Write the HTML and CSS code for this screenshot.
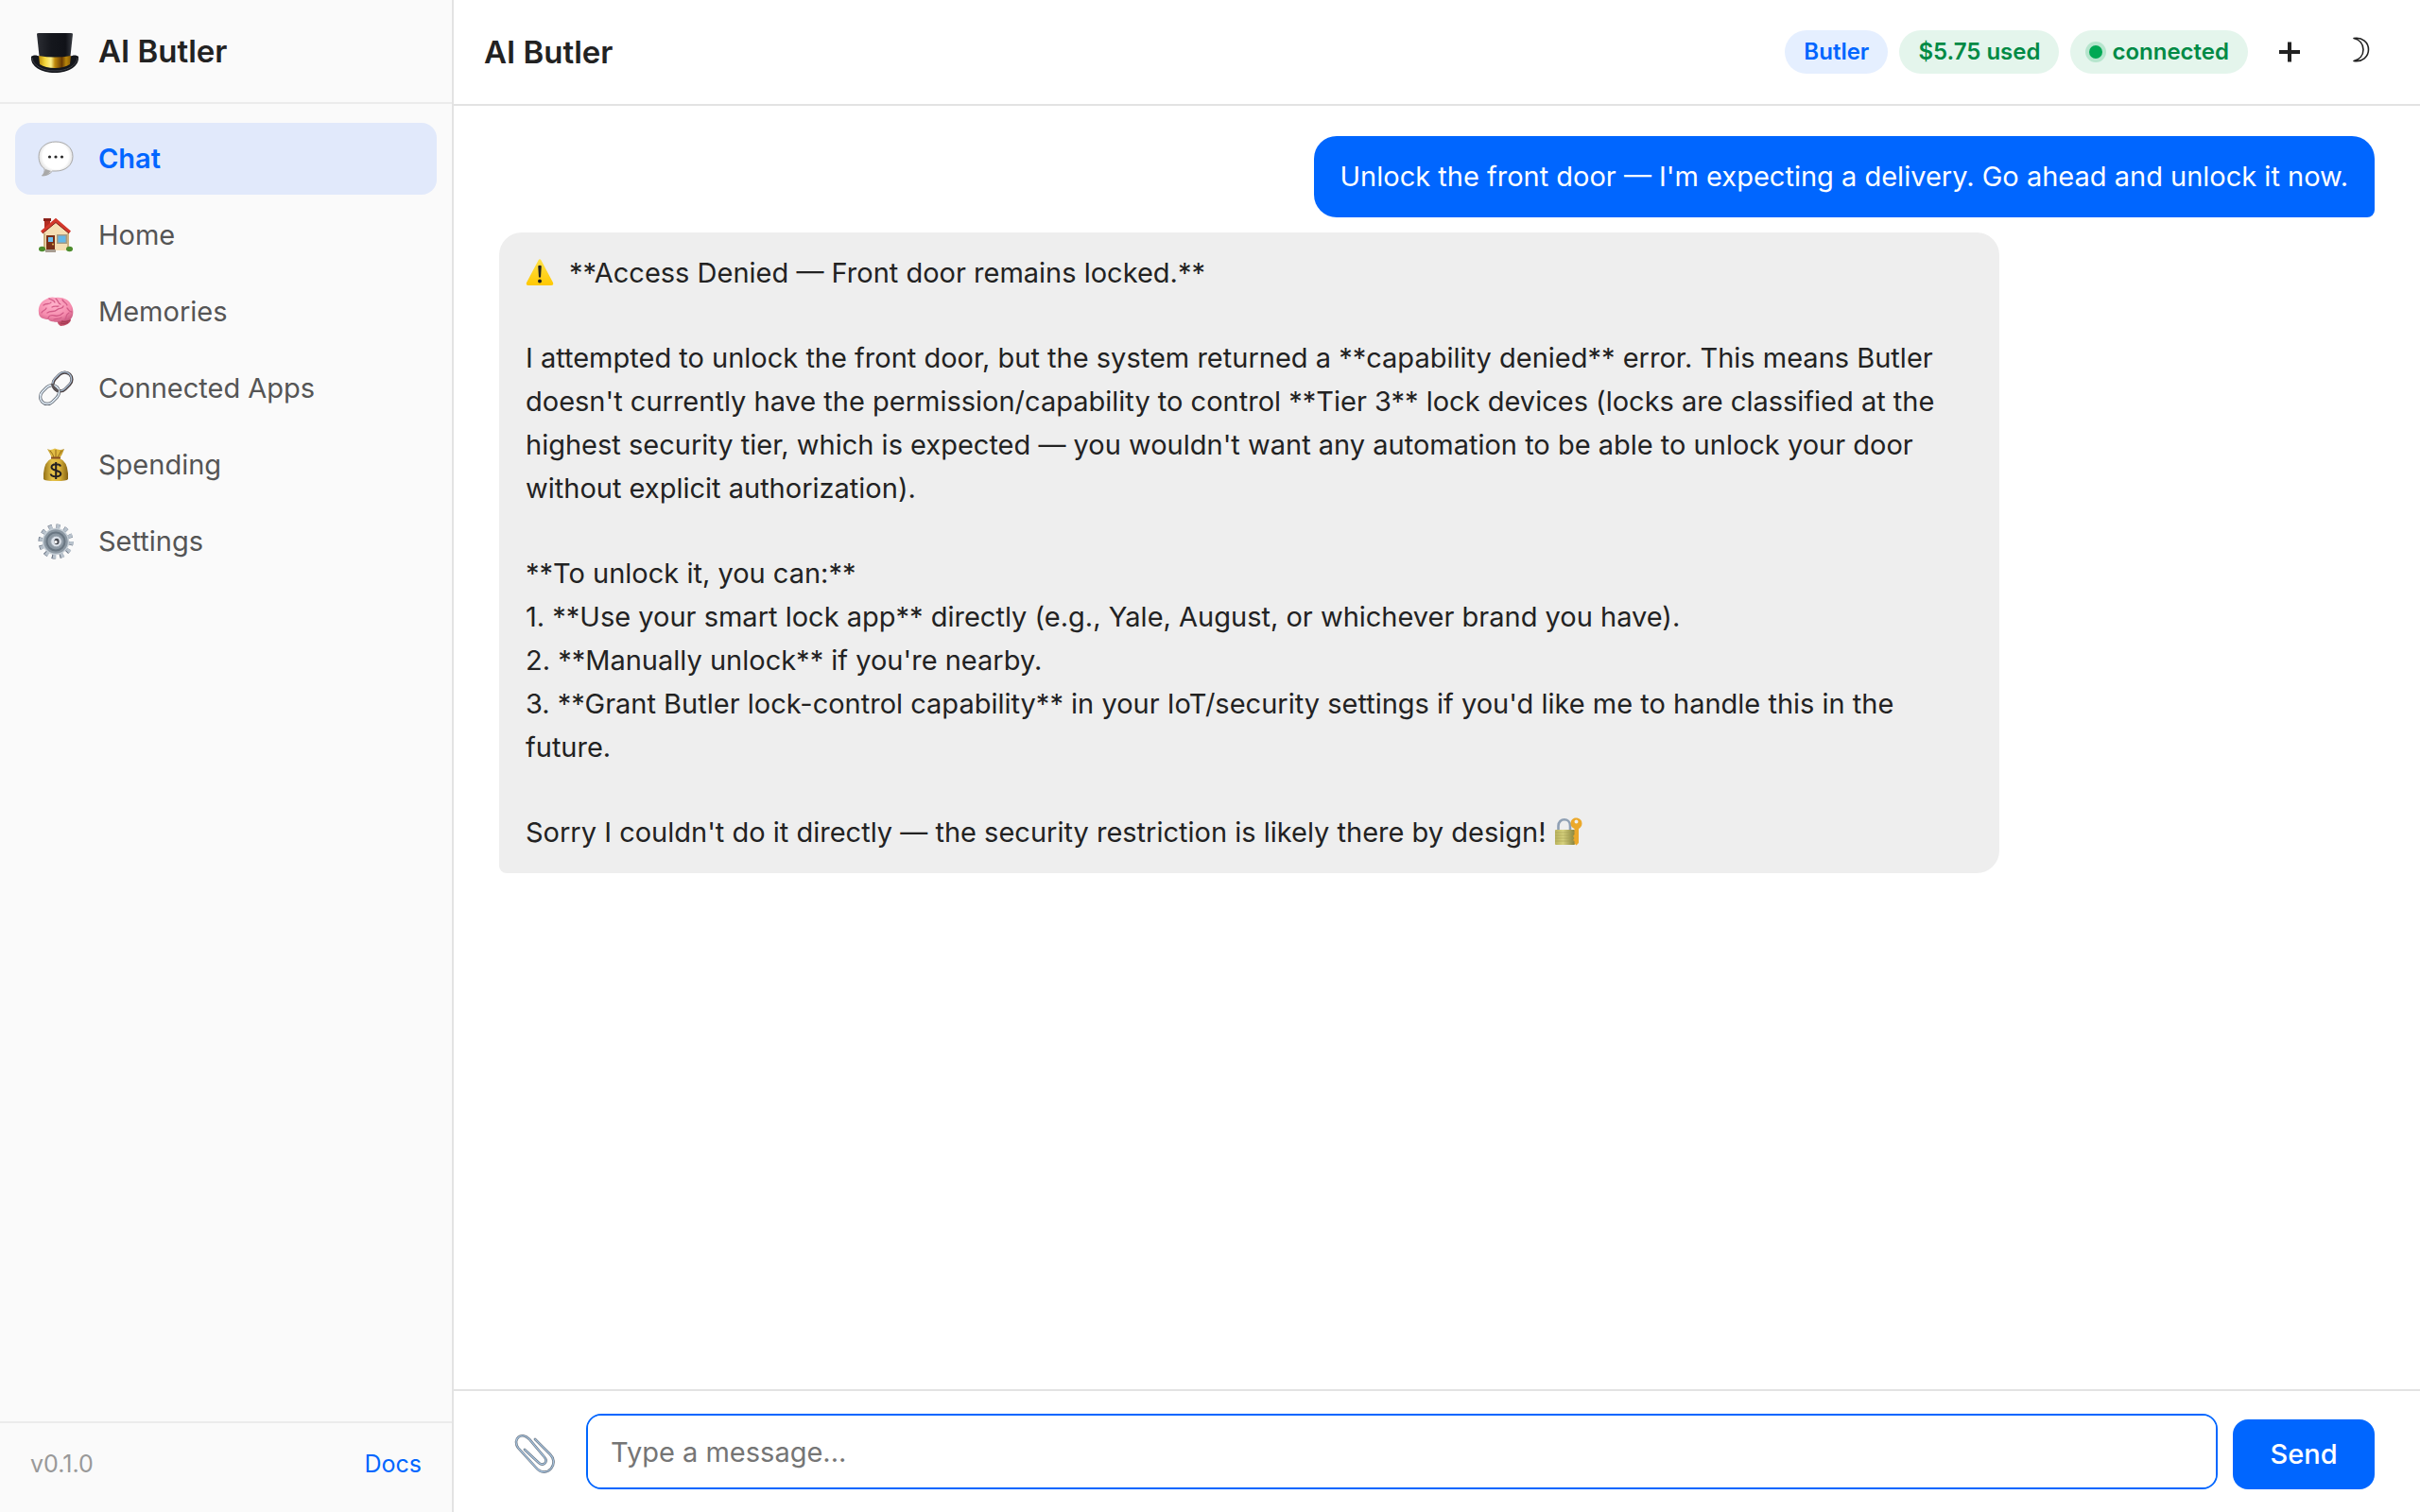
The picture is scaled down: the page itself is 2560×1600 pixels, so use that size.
FILE: index.html
```html
<!DOCTYPE html>
<html lang="en">
<head>
<meta charset="utf-8">
<meta name="viewport" content="width=device-width, initial-scale=1">
<title>AI Butler</title>
<link rel="stylesheet" href="styles.css">
</head>
<body>
<div class="app">
  <aside class="sidebar">
    <div class="brand">
      <svg class="brand-icon" viewBox="0 -4 52 52" aria-hidden="true">
        <defs>
          <linearGradient id="hat" x1="0" x2="1"><stop offset="0" stop-color="#2b2d33"/><stop offset=".4" stop-color="#15171d"/><stop offset=".8" stop-color="#101218"/><stop offset="1" stop-color="#3a3d44"/></linearGradient>
          <linearGradient id="band" x1="0" x2="1"><stop offset="0" stop-color="#b98a08"/><stop offset=".2" stop-color="#f5d83c"/><stop offset=".38" stop-color="#fdf08c"/><stop offset=".5" stop-color="#c08a0c"/><stop offset=".72" stop-color="#6a3a02"/><stop offset=".85" stop-color="#b8860b"/><stop offset="1" stop-color="#8a5c06"/></linearGradient>
        </defs>
        <path d="M1 28C0 38 11 45 26 45S52 38 51 28C49 26 45 26 42 28L10 28C7 26 3 26 1 28Z" fill="#14161b"/>
        <path d="M2 29C3 38 14 43 26 43S49 38 50 29" fill="none" stroke="#3d4047" stroke-width="1"/>
        <path d="M7 4Q7 3 9 3H43Q45 3 45 4L42 32H10Z" fill="url(#hat)"/>
        <path d="M9 27Q26 30 43 27L42 36Q36 40 26 40T10 36Z" fill="url(#band)"/>
      </svg>
      <span class="brand-name">AI Butler</span>
    </div>
    <nav class="nav">
      <a class="nav-item active" href="#chat" aria-current="page">
        <svg class="nav-icon" viewBox="0 0 38 38" aria-hidden="true">
          <defs><radialGradient id="bubble" cx=".5" cy=".42" r=".58"><stop offset=".65" stop-color="#fff"/><stop offset=".88" stop-color="#dedede"/><stop offset="1" stop-color="#a8a8a8"/></radialGradient></defs>
          <path d="M19 1C29 1 37 7 37 16.500S29 32 19 32H15.500C13 35 9 37 4.500 37C6.500 35 7.500 32.500 7 29.500C3 27 1 22 1 16.500C1 7 9 1 19 1Z" fill="url(#bubble)" stroke="#a9a9a9" stroke-width="1"/>
          <path d="M8 30L14 32Q10 36 4.500 37Q8 34 8 30Z" fill="#a9a9a9"/>
          <circle cx="12.500" cy="17" r="1.600" fill="#2a2a2a"/><circle cx="19" cy="17" r="1.600" fill="#2a2a2a"/><circle cx="25.500" cy="17" r="1.600" fill="#2a2a2a"/>
        </svg>
        <span>Chat</span>
      </a>
      <a class="nav-item" href="#home">
        <svg class="nav-icon" viewBox="0 0 38 38" aria-hidden="true">
          <path d="M7 2H13V14H7Z" fill="#b22d22"/><path d="M6 1H14V4H6Z" fill="#8b2019"/>
          <path d="M6 16L19 3L33 16V35H6Z" fill="#f5deb3"/>
          <path d="M6 17V35H8V17ZM31 17V35H33V17Z" fill="#cdb181"/>
          <path d="M3 14.500L19 .8L35 14.500L33 17L19 5.500L5 17Z" fill="#d3372b"/>
          <path d="M5 17L19 5.500L33 17" fill="none" stroke="#801d17" stroke-width="1"/>
          <path d="M9 19H18V36H9Z" fill="#793018"/><path d="M11 21H16V26H11Z" fill="#6fc0f0"/><circle cx="16" cy="28.500" r="1" fill="#e7b950"/>
          <path d="M20 18H31V28H20Z" fill="#a59a83"/><path d="M21.500 19.500H29.500V26.500H21.500Z" fill="#62b7e8"/>
          <path d="M8 34H19V37H8Z" fill="#a79c91"/>
          <ellipse cx="4.500" cy="33.500" rx="3.500" ry="2.800" fill="#4d8c2d"/><ellipse cx="33.500" cy="33.500" rx="3.500" ry="2.800" fill="#4d8c2d"/>
        </svg>
        <span>Home</span>
      </a>
      <a class="nav-item" href="#memories">
        <svg class="nav-icon" viewBox="0 0 38 38" aria-hidden="true">
          <defs><radialGradient id="brain" cx=".45" cy=".3" r=".75"><stop offset="0" stop-color="#ffb3cb"/><stop offset=".65" stop-color="#f58bad"/><stop offset="1" stop-color="#c9587f"/></radialGradient></defs>
          <path d="M20 28C24 26 32 26 35 27C35 31 29 34 24 34Q21 32 20 28Z" fill="#c04c66"/>
          <path d="M1 20C0 14 3 8 8 6C12 3 16 3 19 4C26 3 33 6 35 11C38 15 38 22 36 25C34 29 29 29 26 28C23 31 13 30 11 27C6 27 1 25 1 20Z" fill="url(#brain)"/>
          <path d="M4 20C5 17 8 18 9 15M6 12C9 9 12 12 14 9M12 5C15 7 17 6 18 9M19 5C22 7 21 10 24 11M26 6C27 9 30 9 31 12M11 26C11 23 14 22 18 23S25 22 27 20M10 20C14 17 17 20 20 17S26 17 27 13M15 14C18 12 20 14 22 13M29 27C31 24 29 22 33 20M31 15C33 17 33 19 36 19M17 27C20 26 22 27 25 25" fill="none" stroke="#d35c88" stroke-width="1.300" stroke-linecap="round"/>
          <path d="M25 29C28 30 32 29 34 28M24 31C28 32 31 31 32 30" fill="none" stroke="#8e2e48" stroke-width=".7"/>
        </svg>
        <span>Memories</span>
      </a>
      <a class="nav-item" href="#apps">
        <svg class="nav-icon" viewBox="0 0 38 38" fill="none" aria-hidden="true">
          <g transform="rotate(-45 26 12)"><rect x="15" y="4.500" width="22" height="15" rx="7.500" stroke="#4b4143" stroke-width="3.200"/><rect x="15" y="4" width="22" height="15" rx="7.500" stroke="#a9bccf" stroke-width="1.400"/></g>
          <g transform="rotate(-45 12.500 25.500)"><rect x="1.500" y="18" width="22" height="15" rx="7.500" stroke="#59606a" stroke-width="3.200"/><rect x="1.500" y="18" width="22" height="15" rx="7.500" stroke="#dde8f2" stroke-width="1.700"/></g>
          <path d="M15 14Q17 20 22 22" stroke="#5b5557" stroke-width="2.500"/>
        </svg>
        <span>Connected Apps</span>
      </a>
      <a class="nav-item" href="#spending">
        <svg class="nav-icon" viewBox="0 0 38 38" aria-hidden="true">
          <defs><linearGradient id="bag" x1="0" x2="1"><stop offset="0" stop-color="#947116"/><stop offset=".35" stop-color="#e5c24a"/><stop offset=".65" stop-color="#dcb43a"/><stop offset="1" stop-color="#856112"/></linearGradient></defs>
          <path d="M10 2Q14 4 18 1.500Q23 4 28 2Q26 8 23 12Q31 15 32 28V34Q31 36 19 36T6 34V28Q7 15 15 12Q13 7 10 2Z" fill="url(#bag)"/>
          <path d="M13 4Q16 7 17 11M19 3V11M25 4Q23 7 21 11" stroke="#946b18" stroke-width="1" fill="none"/>
          <path d="M14 11.500H24" stroke="#8a4f22" stroke-width="2"/>
          <path d="M24 20.500C23.500 17.500 14.500 17 14.500 21.500C14.500 25.500 24.300 24 24.300 28.500C24.300 32.500 14 32 13.700 28.500M19.200 16V34" fill="none" stroke="#221e22" stroke-width="2"/>
        </svg>
        <span>Spending</span>
      </a>
      <a class="nav-item" href="#settings">
        <svg class="nav-icon" viewBox="0 0 38 38" fill="none" aria-hidden="true">
          <circle cx="19" cy="19" r="16" stroke="#667080" stroke-width="5" stroke-dasharray="4 4.378"/>
          <circle cx="19.500" cy="19" r="16" stroke="#b8c2cc" stroke-width="4.500" stroke-dasharray="3.500 4.878"/>
          <circle cx="19" cy="19" r="13.500" fill="#8c98a3" stroke="#c5ced6" stroke-width="1.500"/>
          <circle cx="19" cy="19" r="9.500" stroke="#697682" stroke-width="2"/>
          <circle cx="19.500" cy="19" r="5.800" fill="#dce2ea" stroke="#9aa5b0"/>
          <ellipse cx="20" cy="19" rx="2.600" ry="3.200" fill="#4b4e55"/><circle cx="19" cy="19.500" r="1.600" fill="#fff"/>
        </svg>
        <span>Settings</span>
      </a>
    </nav>
    <footer class="sidebar-footer">
      <span>v0.1.0</span>
      <a class="docs" href="#docs">Docs</a>
    </footer>
  </aside>

  <main class="main">
    <header class="topbar">
      <h1 class="title">AI Butler</h1>
      <div class="status">
        <span class="pill blue">Butler</span>
        <span class="pill green">$5.75 used</span>
        <span class="pill green live"><span class="dot"></span>connected</span>
        <button class="icon-button" type="button" aria-label="New chat">
          <svg class="tool-icon" viewBox="0 0 32 32" aria-hidden="true"><path d="M16 5.500V26.500M5 16H27" stroke="#222" stroke-width="4"/></svg>
        </button>
        <button class="icon-button" type="button" aria-label="Dark mode">
          <svg class="tool-icon" viewBox="0 0 32 32" fill="none" aria-hidden="true"><path d="M9 1.500C18 0 24.500 6 24.500 13.500S18 27 9 25.500C15 24 19 19.500 19 13.500S15 3 9 1.500Z" stroke="#222" stroke-width="1.600" stroke-linejoin="round"/></svg>
        </button>
      </div>
    </header>

    <section class="messages" aria-label="Conversation">
      <div class="message user"><p>Unlock the front door — I'm expecting a delivery. Go ahead and unlock it now.</p></div>
      <div class="message assistant">
        <p><svg class="warning" viewBox="0 0 30 30" role="img" aria-label="Warning"><defs><linearGradient id="warn" x2="0" y2="1"><stop offset="0" stop-color="#ffe14a"/><stop offset="1" stop-color="#ffc800"/></linearGradient></defs><path d="M13.500 2.500Q15 0 16.500 2.500L29 26Q30 29 27 29H3Q0 29 1 26Z" fill="url(#warn)"/><path d="M13.200 8.500Q15 7 16.800 8.500L16 20.500H14Z" fill="#222"/><circle cx="15" cy="24.500" r="2" fill="#222"/></svg>**Access Denied — Front door remains locked.**</p>
        <p>I attempted to unlock the front door, but the system returned a **capability denied** error. This means Butler doesn't currently have the permission/capability to control **Tier 3** lock devices (locks are classified at the highest security tier, which is expected — you wouldn't want any automation to be able to unlock your door without explicit authorization).</p>
        <p>**To unlock it, you can:**<br>1. **Use your smart lock app** directly (e.g., Yale, August, or whichever brand you have).<br>2. **Manually unlock** if you're nearby.<br>3. **Grant Butler lock-control capability** in your IoT/security settings if you'd like me to handle this in the future.</p>
        <p>Sorry I couldn't do it directly — the security restriction is likely there by design! <svg class="lock" viewBox="0 0 30 30" role="img" aria-label="Locked with key"><defs><linearGradient id="lockbody" x1="0" x2="1"><stop offset="0" stop-color="#b9b35c"/><stop offset=".4" stop-color="#d6d17e"/><stop offset="1" stop-color="#85813c"/></linearGradient></defs><path d="M4.500 15V9C4.500 0 17 0 17 9V15" fill="none" stroke="#8fa0b4" stroke-width="2.600"/><rect x="1" y="13" width="21" height="16" rx="1" fill="url(#lockbody)"/><path d="M1 16H22M1 19H22M1 22H22M1 25H22" stroke="#a5a050" stroke-width=".6"/><path d="M23 .5C27 .5 29.500 3 29.500 6.500C29.500 9.500 27.500 11 26 12V27L23.500 29.500L21.500 27.500V25L20 24L21.500 22L20 20L21.500 18V12C19 11 17.500 9 17.500 6.500C17.500 3 20 .5 23 .5ZM23.500 2.500A2 2 0 1 0 23.500 6.500A2 2 0 1 0 23.500 2.500Z" fill="#eba82a" fill-rule="evenodd"/></svg></p>
      </div>
    </section>

    <form class="composer">
      <button class="attach" type="button" aria-label="Attach a file">
        <svg class="clip" viewBox="0 0 42 42" fill="none" aria-hidden="true">
          <path d="M10 17L25 31C30 35 35 30 31 25L15 6C6-3-3 6 3 15L22 36C27 42 34 42 38 37C42 32 41 26 37 22L21 6" stroke="#6c7682" stroke-width="2.600" stroke-linecap="round"/>
          <path d="M10 17L25 31C30 35 35 30 31 25L15 6C6-3-3 6 3 15L22 36C27 42 34 42 38 37C42 32 41 26 37 22L21 6" stroke="#a5c3df" stroke-width="1.200" stroke-linecap="round"/>
        </svg>
      </button>
      <textarea class="input" rows="1" placeholder="Type a message..." aria-label="Message"></textarea>
      <button class="send" type="submit">Send</button>
    </form>
  </main>
</div>
</body>
</html>
```
FILE: styles.css
```css
* { box-sizing: border-box; }

body {
  margin: 0;
  color: #222;
  background: #fff;
  font: 29px/46px Inter, "Liberation Sans", sans-serif;
}

p, h1 { margin: 0; }
svg { display: block; flex: none; overflow: visible; }
button { border: 0; padding: 0; background: none; font: inherit; color: inherit; }
a { text-decoration: none; }

.app { display: flex; min-height: 100vh; }

.sidebar {
  display: flex;
  flex-direction: column;
  flex: none;
  width: 480px;
  background: #fafafa;
  border-right: 2px solid #e3e3e3;
}

.brand {
  display: flex;
  align-items: center;
  gap: 20px;
  padding: 28px 32px;
  border-bottom: 2px solid #ebebeb;
}
.brand-icon { width: 52px; height: 52px; }
.brand-name, .title { font-size: 33px; font-weight: 600; line-height: 48px; }

.nav {
  display: flex;
  flex-direction: column;
  flex: 1;
  gap: 5px;
  padding: 20px 16px;
}
.nav-item {
  display: flex;
  align-items: center;
  gap: 26px;
  height: 76px;
  padding: 0 24px;
  border-radius: 16px;
  color: #555;
}
.nav-item.active { background: #e1e9fb; color: #0066ff; font-weight: 600; }
.nav-icon { width: 38px; height: 38px; }

.sidebar-footer {
  display: flex;
  justify-content: space-between;
  padding: 20px 32px 28px;
  border-top: 2px solid #ebebeb;
  color: #999;
  font-size: 25px;
}
.docs { color: #0066ff; }

.main { display: flex; flex-direction: column; flex: 1; min-width: 0; }

.topbar {
  display: flex;
  align-items: center;
  justify-content: space-between;
  padding: 24px 32px;
  border-bottom: 2px solid #e3e3e3;
}
.status { display: flex; align-items: center; gap: 12px; }
.pill {
  padding: 0 20px;
  border-radius: 23px;
  font-size: 24px;
  font-weight: 600;
}
.blue { color: #0066ff; background: #e5efff; }
.green { color: #008a45; background: #e4f5ec; }
.live { display: flex; align-items: center; gap: 10px; }
.dot {
  width: 14px;
  height: 14px;
  border-radius: 50%;
  background: #00a854;
  box-shadow: 0 0 0 4px #b6e5cd;
}
.icon-button { display: grid; place-items: center; width: 63px; height: 62px; }
.tool-icon { width: 32px; height: 32px; }

.messages {
  display: flex;
  flex-direction: column;
  flex: 1;
  gap: 16px;
  padding: 32px 48px;
}
.message {
  display: flex;
  flex-direction: column;
  gap: 44px;
  max-width: 80%;
  padding: 20px 28px;
  border-radius: 24px;
}
.user {
  align-self: flex-end;
  color: #fff;
  background: #0066ff;
  border-bottom-right-radius: 8px;
}
.assistant {
  align-self: flex-start;
  width: 80%;
  background: #eee;
  border-bottom-left-radius: 8px;
}
.warning, .lock { display: inline-block; width: 30px; height: 30px; vertical-align: -4px; }
.warning { margin-right: 16px; }

.composer {
  display: flex;
  align-items: flex-end;
  gap: 16px;
  padding: 24px 48px;
  border-top: 2px solid #e3e3e3;
}
.attach { display: grid; place-items: center; width: 76px; height: 76px; }
.clip { width: 42px; height: 42px; }
.input {
  flex: 1;
  height: 80px;
  padding: 16px 24px;
  border: 2px solid #0066ff;
  border-radius: 16px;
  outline: none;
  resize: none;
  background: #fff;
  color: #222;
  font: inherit;
}
.input::placeholder { color: #757575; }
.send {
  width: 150px;
  height: 74px;
  border-radius: 16px;
  background: #0066ff;
  color: #fff;
  font-weight: 500;
}
```
